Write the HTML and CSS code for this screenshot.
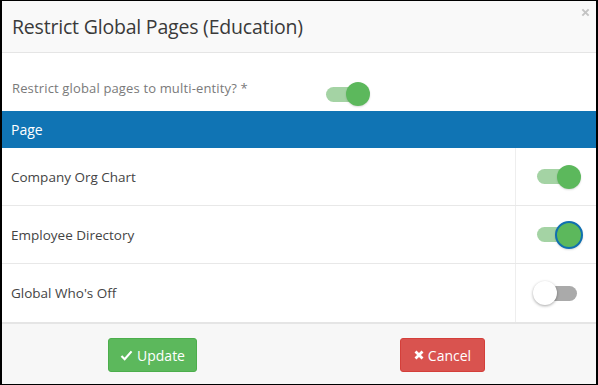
FILE: index.html
```html
<!DOCTYPE html>
<html lang="en">
<head>
<meta charset="UTF-8" />
<title>Restrict Global Pages</title>
<link rel="stylesheet" href="styles.css">
</head>
<body>

<div class="modal">
    <div class="modal-header">
        <h4 class="modal-title">Restrict Global Pages (Education)</h4>
        <span class="close">
            <svg viewBox="0 0 10 10"><path d="M1.5 1.5 L8.5 8.5 M8.5 1.5 L1.5 8.5"/></svg>
        </span>
    </div>

    <div class="modal-body">
        <div class="field">
            <label class="field-label">Restrict global pages to multi-entity? *</label>
            <div class="field-toggle">
                <span class="switch on"></span>
            </div>
        </div>

        <div class="table">
            <div class="table-head">Page</div>
            <div class="table-row">
                <div class="cell-name">Company Org Chart</div>
                <div class="cell-toggle"><span class="switch on"></span></div>
            </div>
            <div class="table-row">
                <div class="cell-name">Employee Directory</div>
                <div class="cell-toggle"><span class="switch on focus"></span></div>
            </div>
            <div class="table-row">
                <div class="cell-name">Global Who's Off</div>
                <div class="cell-toggle"><span class="switch"></span></div>
            </div>
        </div>
    </div>

    <div class="modal-footer">
        <button class="btn btn-success">
            <svg class="icon-check" viewBox="0 0 14 12"><path d="M1.5 6.5 L5 10 L12.5 1.5"/></svg>
            Update
        </button>
        <button class="btn btn-danger">
            <svg class="icon-times" viewBox="0 0 10 10"><path d="M1.5 1.5 L8.5 8.5 M8.5 1.5 L1.5 8.5"/></svg>
            Cancel
        </button>
    </div>
</div>

</body>
</html>
```

FILE: styles.css
```css
body {
    margin: 0;
    background: #fff;
    font-family: "Open Sans", "Noto Sans", sans-serif;
    color: #444;
}

.modal {
    width: 598px;
    height: 385px;
    box-sizing: border-box;
    border-top: 1px solid #000;
    border-bottom: 1px solid #000;
    border-left: 2px solid #000;
    border-right: 2px solid #000;
    display: flex;
    flex-direction: column;
    background: #fff;
}

.modal-header {
    height: 51px;
    border-bottom: 1px solid #e5e5e5;
    background: #f9f9f9;
    display: flex;
    align-items: center;
    padding: 0 10px;
    position: relative;
}

.modal-title {
    margin: 0;
    font-size: 19.5px;
    font-weight: normal;
    color: #3a3a3a;
    letter-spacing: -0.2px;
}

.close {
    position: absolute;
    right: 6px;
    top: 7px;
    width: 9px;
    height: 9px;
}

.close svg {
    width: 100%;
    height: 100%;
    display: block;
    stroke: #c4c4c4;
    stroke-width: 2.2;
    fill: none;
}

.modal-body {
    display: flex;
    flex-direction: column;
}

.field {
    height: 58px;
    display: flex;
    align-items: center;
    padding: 12px 0 0 10px;
    box-sizing: border-box;
}

.field-label {
    width: 314px;
    font-size: 13px;
    color: #7a7a7a;
    letter-spacing: 0.15px;
}

.field-toggle {
    display: flex;
    align-items: center;
    margin-top: 12px;
}

/* toggle switch */
.switch {
    width: 40px;
    height: 15px;
    border-radius: 8px;
    background: #aaa;
    position: relative;
    display: block;
}

.switch::after {
    content: "";
    position: absolute;
    width: 24px;
    height: 24px;
    border-radius: 50%;
    top: 50%;
    left: -4px;
    transform: translateY(-50%);
    background: #fff;
    box-shadow: 0 1px 3px rgba(0,0,0,0.35);
}

.switch.on {
    background: #a4d3a4;
}

.switch.on::after {
    left: 20px;
    background: #5cb85c;
    box-shadow: 0 1px 2px rgba(0,0,0,0.15);
}

.switch.focus::after {
    width: 24px;
    height: 24px;
    left: 20px;
    border: 2px solid #1070b0;
    margin-left: -2px;
    box-sizing: content-box;
}

.table-head {
    height: 37px;
    background: #1074b4;
    color: #fff;
    font-size: 14px;
    display: flex;
    align-items: center;
    padding-left: 9px;
}

.table-row {
    height: 58px;
    display: flex;
    border-bottom: 1px solid #e8e8e8;
    box-sizing: border-box;
}

.table-row:last-child {
    border-bottom: none;
}

.cell-name {
    width: 514px;
    border-right: 1px solid #eee;
    display: flex;
    align-items: center;
    padding-left: 9px;
    box-sizing: border-box;
    font-size: 13.5px;
    color: #444;
}

.cell-toggle {
    flex: 1;
    display: flex;
    align-items: center;
    justify-content: center;
    padding-left: 1px;
}

.modal-footer {
    flex: 1;
    border-top: 2px solid #e5e5e5;
    background: #f7f7f7;
    display: flex;
    align-items: flex-start;
    padding: 14px 0 0 106px;
    gap: 203px;
}

.btn {
    height: 34px;
    border: none;
    border-radius: 3px;
    color: #fff;
    font-family: "Open Sans", "Noto Sans", sans-serif;
    font-size: 14px;
    display: flex;
    align-items: center;
    justify-content: center;
    gap: 4px;
    padding: 0;
}

.btn-success {
    width: 89px;
    background: #5cb85c;
    border: 1px solid #4cae4c;
}

.btn-danger {
    width: 85px;
    background: #d9534f;
    border: 1px solid #d43f3a;
}

.icon-check {
    width: 13px;
    height: 11px;
    stroke: #fff;
    stroke-width: 2.4;
    fill: none;
}

.icon-times {
    width: 10px;
    height: 10px;
    stroke: #fff;
    stroke-width: 2.8;
    fill: none;
}
```
